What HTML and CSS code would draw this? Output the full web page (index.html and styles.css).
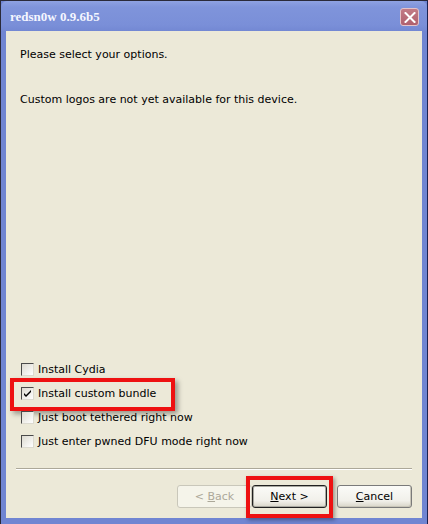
FILE: index.html
```html
<!DOCTYPE html>
<html>
<head>
<meta charset="utf-8">
<link rel="stylesheet" href="styles.css">
</head>
<body>
<div class="window">
  <div class="titlebar">
    <span class="title">redsn0w 0.9.6b5</span>
    <span class="close"><svg width="12" height="11" viewBox="0 0 12 11"><path d="M1.5 1 L10.5 10 M10.5 1 L1.5 10" stroke="#fff" stroke-width="2" stroke-linecap="square"/></svg></span>
  </div>
  <div class="client">
    <p class="msg">Please select your options.</p>
    <p class="msg msg2">Custom logos are not yet available for this device.</p>
    <div class="spacer"></div>
    <div class="options">
      <div class="opt"><span class="box"></span><span>Install Cydia</span></div>
      <div class="opt hl"><span class="box checked"><svg width="9" height="9" viewBox="0 0 9 9"><path d="M1 4 L3 6 L8 1 L8 3 L3 8 L1 6 Z" fill="#000"/></svg></span><span>Install custom bundle</span></div>
      <div class="opt"><span class="box"></span><span>Just boot tethered right now</span></div>
      <div class="opt"><span class="box"></span><span>Just enter pwned DFU mode right now</span></div>
    </div>
    <div class="sep"></div>
    <div class="buttons">
      <span class="btn disabled"><span>&lt; <u>B</u>ack</span></span>
      <span class="btn default hlbtn"><span><u>N</u>ext &gt;</span></span>
      <span class="btn cancel"><span><u>C</u>ancel</span></span>
    </div>
  </div>
</div>
</body>
</html>
```

FILE: styles.css
```css
html, body {
  margin: 0;
  padding: 0;
  background: #1a1a1a;
}
.window {
  width: 428px;
  height: 524px;
  box-sizing: border-box;
  border-top: 1px solid #2a2a3a;
  border-left: 1px solid #2a2a3a;
  border-right: 1px solid #1b2250;
  background: #7085d2;
  display: flex;
  flex-direction: column;
  font-family: "DejaVu Sans", "Liberation Sans", sans-serif;
  font-size: 11px;
}
.titlebar {
  height: 30px;
  flex: none;
  display: flex;
  align-items: center;
  justify-content: space-between;
  padding: 0 8px 0 9px;
  background: linear-gradient(#8ea2e2 0%, #7f94db 20%, #7a8fd8 80%, #7388d3 100%);
  border-radius: 6px 6px 0 0;
}
.title {
  font-family: "Liberation Serif", serif;
  font-weight: bold;
  font-size: 13px;
  color: #f4f6ff;
  padding-top: 1px;
}
.close {
  width: 19px;
  height: 18px;
  box-sizing: border-box;
  border: 1px solid #e4c2c8;
  border-radius: 3px;
  background: linear-gradient(#c27b86, #b0606e);
  display: flex;
  align-items: center;
  justify-content: center;
  margin-top: 2px;
}
.client {
  flex: 1;
  margin: 0 5px 6px 5px;
  background: #ece9d8;
  display: flex;
  flex-direction: column;
  padding: 17px 10px 10px 14px;
  color: #000;
}
.msg {
  margin: 0;
  line-height: 13px;
}
.msg2 {
  margin-top: 32px;
}
.spacer {
  flex: 1;
}
.options {
  display: flex;
  flex-direction: column;
  margin-left: 1px;
  margin-bottom: 15px;
}
.opt {
  height: 24px;
  display: flex;
  align-items: center;
  gap: 4px;
  position: relative;
}
.box {
  width: 13px;
  height: 13px;
  box-sizing: border-box;
  border: 1px solid;
  border-color: #4a4a4a #dcdad0 #dcdad0 #4a4a4a;
  background: linear-gradient(135deg, #dcdad0, #ffffff);
  display: flex;
  align-items: center;
  justify-content: center;
}
.hl::after {
  content: "";
  position: absolute;
  left: -11px;
  top: -3px;
  width: 165px;
  height: 33px;
  box-sizing: border-box;
  border: 4px solid #ee1111;
  box-shadow: 3px 3px 5px rgba(0, 0, 0, 0.35);
}
.sep {
  margin-left: -4px;
  border-top: 1px solid #aca899;
  border-bottom: 1px solid #ffffff;
  height: 0;
  margin-bottom: 15px;
}
.buttons {
  display: flex;
  justify-content: flex-end;
}
.btn {
  width: 75px;
  height: 23px;
  box-sizing: border-box;
  display: flex;
  align-items: center;
  justify-content: center;
  border: 1px solid #7a7a7a;
  border-radius: 3px;
  background: linear-gradient(#fbfbf8, #f1f0ea 70%, #d8d5c8);
  box-shadow: inset -1px -1px 0 #c8c5b8;
  position: relative;
}
.disabled {
  color: #aca899;
  border-color: #c9c7ba;
  background: #f5f4ea;
  box-shadow: none;
}
.default {
  border: 1px solid #202020;
  box-shadow: inset 0 0 0 1px #a8a8a0;
}
.cancel {
  margin-left: 10px;
}
.hlbtn::after {
  content: "";
  position: absolute;
  left: -7px;
  top: -10px;
  width: 87px;
  height: 42px;
  box-sizing: border-box;
  border: 4px solid #ee1111;
  box-shadow: 2px 2px 4px rgba(0, 0, 0, 0.35);
}
```
